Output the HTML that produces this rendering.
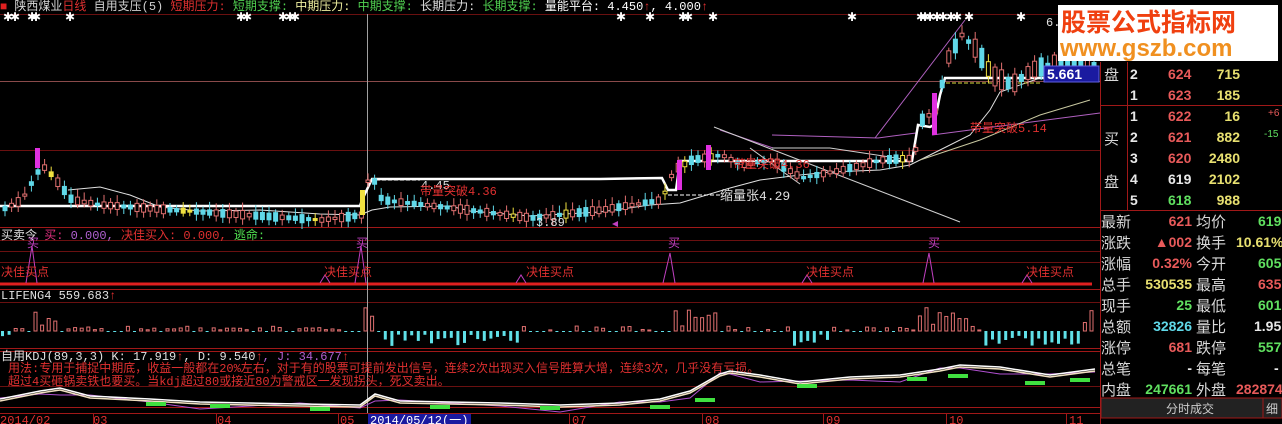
<!DOCTYPE html>
<html><head><meta charset="utf-8"><style>
body{margin:0;background:#000;width:1282px;height:424px;overflow:hidden;position:relative;font-family:"Liberation Sans","WenQuanYi Zen Hei","Noto Sans CJK SC",sans-serif}
svg{position:absolute;left:0;top:0}
.t{font-family:"Liberation Mono","WenQuanYi Zen Hei","Noto Sans CJK SC",monospace;font-size:12px}
.r{position:absolute;font-size:14px;white-space:nowrap;font-family:"Liberation Sans","WenQuanYi Zen Hei","Noto Sans CJK SC",sans-serif;font-weight:bold}
.l{position:absolute;font-size:15px;color:#d8d8d8;white-space:nowrap;font-family:"WenQuanYi Zen Hei","Noto Sans CJK SC",sans-serif}
.rd{color:#e85a5a}.yl{color:#e8e070}.gr{color:#60e060}.cy{color:#60d8e8}.wh{color:#e8e8e8}
</style></head><body>
<svg width="1282" height="424" id="s">
<g stroke="#6a1010" stroke-width="1">
<line x1="0" y1="14.5" x2="1100" y2="14.5"/>
<line x1="0" y1="150.5" x2="1100" y2="150.5"/>
<line x1="0" y1="240.5" x2="1100" y2="240.5"/>
<line x1="0" y1="251.5" x2="1100" y2="251.5"/>
<line x1="0" y1="262.5" x2="1100" y2="262.5"/>
<line x1="0" y1="302.5" x2="1100" y2="302.5"/>
<line x1="0" y1="386.5" x2="1100" y2="386.5"/>
</g>
<g stroke="#a01818" stroke-width="1">
<line x1="0" y1="227.5" x2="1100" y2="227.5"/>
<line x1="0" y1="289.5" x2="1100" y2="289.5"/>
<line x1="0" y1="348.5" x2="1100" y2="348.5"/>
<line x1="0" y1="351.5" x2="1100" y2="351.5"/>
<line x1="0" y1="407.5" x2="1100" y2="407.5"/>
<line x1="0" y1="413.5" x2="1282" y2="413.5"/>
<line x1="1100.5" y1="62" x2="1100.5" y2="424"/>
</g>
<line x1="0" y1="81.5" x2="1100" y2="81.5" stroke="#8a4a4a"/>
<line x1="0" y1="284" x2="1092" y2="284" stroke="#e02020" stroke-width="3"/>
<line x1="367.5" y1="14" x2="367.5" y2="413" stroke="#a0a0a0"/>
<g stroke="#b060c0" fill="none" stroke-width="1">
<polyline points="772,135 878,138 916,133"/>
<polyline points="875,138 965,20"/>
<polyline points="932,135 1100,113"/>
<polyline points="773,148 720,130"/>
</g>
<g stroke="#d0d0d0" fill="none" stroke-width="1">
<polyline points="714,127 960,222"/>
<polyline points="772,148 830,148 910,160"/>
<polyline points="750,148 800,184"/>
</g>
<polyline fill="none" stroke="#e0e0e0" stroke-width="1" points="68,190 100,187 130,195 160,207 200,211 260,210 320,214 360,215 372,210 390,207 450,206 470,211 530,216 600,212 650,205 680,203 700,197 730,188 760,180 800,175 830,172 880,170 910,165 940,150 970,135 990,110 1000,92 1040,78 1090,70"/>
<polyline fill="none" stroke="#c8c8a0" stroke-width="1" points="920,160 980,140 1040,115 1090,100"/>
<polyline fill="none" stroke="#fff" stroke-width="2.5" points="0,206 360,206 362,200 372,179 600,179 662,178 668,190 676,190 680,161 912,161 918,125 930,127 934,125 940,95 945,78 1044,78"/>
<polyline fill="none" stroke="#fff" stroke-width="1" stroke-dasharray="4,2" points="376,180 420,180 M376,192 440,192"/>
<polyline fill="none" stroke="#fff" stroke-dasharray="4,2" points="668,195 720,195"/>
<polyline fill="none" stroke="#e0e040" stroke-dasharray="4,2" points="940,83 1040,83"/>
<g id="cand"></g>
<g class="t">
<text x="421" y="189" fill="#e0e0e0">4.45</text>
<text x="420" y="195" fill="#e03030">带量突破4.36</text>
<text x="720" y="200" fill="#e0e0e0" font-size="13">缩量张4.29</text>
<text x="733" y="168" fill="#e03030">带量突破4.36</text>
<text x="970" y="132" fill="#e03030">带量突破5.14</text>
<text x="536" y="226" fill="#e0e0e0">3.89</text>
<text x="1046" y="26" fill="#e0e0e0">6.</text>
</g>
<polygon points="612,224 618,221 618,227" fill="#c040c0"/>
<g fill="#fff" font-size="9" class="t" id="stars"></g>
<text class="t" y="10" x="0"><tspan fill="#e02020">■</tspan><tspan fill="#d8d8d8"> 陕西煤业</tspan><tspan fill="#e03030">日线</tspan><tspan fill="#d0d0d0"> 自用支压(5) </tspan><tspan fill="#e03030">短期压力: </tspan><tspan fill="#50d050">短期支撑: </tspan><tspan fill="#f0f0a0">中期压力: </tspan><tspan fill="#50d050">中期支撑: </tspan><tspan fill="#e0e0e0">长期压力: </tspan><tspan fill="#50d050">长期支撑: </tspan><tspan fill="#fff">量能平台: 4.450</tspan><tspan fill="#e03030">↑</tspan><tspan fill="#fff">, 4.000</tspan><tspan fill="#e03030">↑</tspan></text>
<text class="t" y="239" x="1"><tspan fill="#e0e0e0">买卖令 </tspan><tspan fill="#e03080">买: </tspan><tspan fill="#b060d0">0.000, </tspan><tspan fill="#e03030">决佳买入: 0.000, </tspan><tspan fill="#50e050">逃命:</tspan></text>
<g fill="none" stroke="#c040c0">
<polyline points="26,283 32,246 37,283"/><polyline points="355,283 361,246 366,283"/>
<polyline points="663,283 670,253 675,283"/><polyline points="923,283 929,253 934,283"/>
<polyline points="320,283 325,275 330,283"/><polyline points="516,283 521,275 526,283"/><polyline points="802,283 807,275 812,283"/><polyline points="1022,283 1027,275 1032,283"/>
</g>
<g class="t" fill="#e03030" font-size="12">
<text x="27" y="247" fill="#c040c0">买</text><text x="356" y="247" fill="#c040c0">买</text><text x="668" y="247" fill="#c040c0">买</text><text x="928" y="247" fill="#c040c0">买</text>
<text x="1" y="276">决佳买点</text><text x="324" y="276">决佳买点</text><text x="526" y="276">决佳买点</text><text x="806" y="276">决佳买点</text><text x="1026" y="276">决佳买点</text>
</g>
<text class="t" y="299" x="1"><tspan fill="#e0e0e0">LIFENG4 559.683</tspan><tspan fill="#e03030">↑</tspan></text>
<g id="bars"></g>
<text class="t" y="360" x="1"><tspan fill="#e0e0e0">自用KDJ(89,3,3) K: 17.919</tspan><tspan fill="#e03030">↑</tspan><tspan fill="#e0e0e0">, D: 9.540</tspan><tspan fill="#e03030">↑</tspan><tspan fill="#b060d0">, J: 34.677</tspan><tspan fill="#e03030">↑</tspan></text>
<text class="t" y="372" x="8" fill="#e03030">用法:专用于捕捉中期底，收益一般都在20%左右，对于有的股票可提前发出信号，连续2次出现买入信号胜算大增，连续3次，几乎没有亏损。</text>
<text class="t" y="385" x="8" fill="#e03030">超过4买砸锅卖铁也要买。当kdj超过80或接近80为警戒区一发现拐头，死叉卖出。</text>
<g id="kdj"></g>
<rect x="368" y="414" width="103" height="10" fill="#1a1aa0"/>
<g class="t" fill="#e03030" font-size="12">
<text x="0" y="424">2014/02</text><text x="93" y="424">03</text><text x="217" y="424">04</text><text x="340" y="424">05</text><text x="572" y="424">07</text><text x="705" y="424">08</text><text x="826" y="424">09</text><text x="949" y="424">10</text><text x="1069" y="424">11</text>
<text x="370" y="424" fill="#fff">2014/05/12(一)</text>
</g>
<g stroke="#a01818"><line x1="93.5" y1="414" x2="93.5" y2="424"/><line x1="216.5" y1="414" x2="216.5" y2="424"/><line x1="338.5" y1="414" x2="338.5" y2="424"/><line x1="569.5" y1="414" x2="569.5" y2="424"/><line x1="702.5" y1="414" x2="702.5" y2="424"/><line x1="823.5" y1="414" x2="823.5" y2="424"/><line x1="946.5" y1="414" x2="946.5" y2="424"/><line x1="1066.5" y1="414" x2="1066.5" y2="424"/></g>
<g stroke="#a01818"><line x1="1100" y1="105.5" x2="1282" y2="105.5"/><line x1="1100" y1="210.5" x2="1282" y2="210.5"/><line x1="1127.5" y1="62" x2="1127.5" y2="210"/></g>
<rect x="1101" y="398" width="168" height="20" fill="#222" stroke="#a01818"/>
<rect x="1263" y="398" width="19" height="20" fill="#222" stroke="#a01818"/>
<rect x="1044" y="66" width="55" height="16" fill="#1a1aa0" stroke="#6060e0"/>
<text x="1047" y="79" fill="#fff" font-size="14" font-weight="bold" font-family="Liberation Sans">5.661</text>
<rect x="1058" y="5" width="220" height="56" fill="#fff"/>
<text x="1061" y="31" fill="#f04010" font-size="25" font-weight="bold" font-family="WenQuanYi Zen Hei,Noto Sans CJK SC,sans-serif">股票公式指标网</text>
<text x="1060" y="56" fill="#f09020" font-size="24" font-weight="bold" font-family="Liberation Sans">www.gszb.com</text>
</svg>
<div class="l" style="left:1104px;top:64px">盘</div>
<div class="l" style="left:1104px;top:128px">买</div>
<div class="l" style="left:1104px;top:171px">盘</div>
<div class="r wh" style="left:1130px;top:66px">2</div><div class="r rd" style="left:1168px;top:66px">624</div><div class="r yl" style="left:1208px;top:66px;width:32px;text-align:right">715</div>
<div class="r wh" style="left:1130px;top:87px">1</div><div class="r rd" style="left:1168px;top:87px">623</div><div class="r yl" style="left:1208px;top:87px;width:32px;text-align:right">185</div>
<div class="r wh" style="left:1130px;top:108px">1</div><div class="r rd" style="left:1168px;top:108px">622</div><div class="r yl" style="left:1200px;top:108px;width:40px;text-align:right">16</div><div class="r rd" style="left:1268px;top:108px;font-size:10px;font-weight:normal">+6</div>
<div class="r wh" style="left:1130px;top:129px">2</div><div class="r rd" style="left:1168px;top:129px">621</div><div class="r yl" style="left:1200px;top:129px;width:40px;text-align:right">882</div><div class="r gr" style="left:1264px;top:129px;font-size:10px;font-weight:normal">-15</div>
<div class="r wh" style="left:1130px;top:150px">3</div><div class="r rd" style="left:1168px;top:150px">620</div><div class="r yl" style="left:1200px;top:150px;width:40px;text-align:right">2480</div>
<div class="r wh" style="left:1130px;top:171px">4</div><div class="r wh" style="left:1168px;top:171px">619</div><div class="r yl" style="left:1200px;top:171px;width:40px;text-align:right">2102</div>
<div class="r wh" style="left:1130px;top:192px">5</div><div class="r gr" style="left:1168px;top:192px">618</div><div class="r yl" style="left:1200px;top:192px;width:40px;text-align:right">988</div>

<div class="l" style="left:1101px;top:211px">最新</div><div class="r rd" style="left:1140px;top:213px;width:52px;text-align:right">621</div><div class="l" style="left:1196px;top:211px">均价</div><div class="r gr" style="left:1258px;top:213px">619</div>
<div class="l" style="left:1101px;top:232px">涨跌</div><div class="r rd" style="left:1140px;top:234px;width:52px;text-align:right">▲002</div><div class="l" style="left:1196px;top:232px">换手</div><div class="r yl" style="left:1236px;top:234px">10.61%</div>
<div class="l" style="left:1101px;top:253px">涨幅</div><div class="r rd" style="left:1140px;top:255px;width:52px;text-align:right">0.32%</div><div class="l" style="left:1196px;top:253px">今开</div><div class="r gr" style="left:1258px;top:255px">605</div>
<div class="l" style="left:1101px;top:274px">总手</div><div class="r yl" style="left:1130px;top:276px;width:62px;text-align:right">530535</div><div class="l" style="left:1196px;top:274px">最高</div><div class="r rd" style="left:1258px;top:276px">635</div>
<div class="l" style="left:1101px;top:295px">现手</div><div class="r gr" style="left:1140px;top:297px;width:52px;text-align:right">25</div><div class="l" style="left:1196px;top:295px">最低</div><div class="r gr" style="left:1258px;top:297px">601</div>
<div class="l" style="left:1101px;top:316px">总额</div><div class="r cy" style="left:1130px;top:318px;width:62px;text-align:right">32826</div><div class="l" style="left:1196px;top:316px">量比</div><div class="r wh" style="left:1254px;top:318px">1.95</div>
<div class="l" style="left:1101px;top:337px">涨停</div><div class="r rd" style="left:1140px;top:339px;width:52px;text-align:right">681</div><div class="l" style="left:1196px;top:337px">跌停</div><div class="r gr" style="left:1258px;top:339px">557</div>
<div class="l" style="left:1101px;top:358px">总笔</div><div class="r wh" style="left:1140px;top:360px;width:52px;text-align:right">-</div><div class="l" style="left:1196px;top:358px">每笔</div><div class="r wh" style="left:1274px;top:360px">-</div>
<div class="l" style="left:1101px;top:379px">内盘</div><div class="r gr" style="left:1130px;top:381px;width:62px;text-align:right">247661</div><div class="l" style="left:1196px;top:379px">外盘</div><div class="r rd" style="left:1236px;top:381px">282874</div>
<div class="l" style="left:1166px;top:400px;font-size:12px;color:#ccc">分时成交</div>
<div class="l" style="left:1266px;top:400px;font-size:12px;color:#ccc">细</div>
<script>
var NS="http://www.w3.org/2000/svg";
function el(p,t,a){var e=document.createElementNS(NS,t);for(var k in a)e.setAttribute(k,a[k]);document.getElementById(p).appendChild(e);return e;}
var kp=[[0,210],[20,200],[40,165],[50,175],[70,200],[100,205],[200,212],[320,220],[360,215],[368,170],[380,200],[450,208],[530,218],[600,210],[660,200],[672,170],[690,160],[720,155],[740,165],[770,160],[800,178],[840,170],[880,160],[912,158],[920,120],[935,110],[945,60],[960,35],[975,50],[990,75],[1010,85],[1030,70],[1060,60],[1095,65]];
function py(x){for(var i=1;i<kp.length;i++){if(x<=kp[i][0]){var a=kp[i-1],b=kp[i];return a[1]+(b[1]-a[1])*(x-a[0])/(b[0]-a[0]);}}return 65;}
var seed=3;function rnd(){seed=(seed*9301+49297)%233280;return seed/233280;}
for(var x=3;x<1095;x+=6.6){var y=py(x);var h=2+rnd()*(y<120?18:7);var up=rnd()>0.5;var c=up?"#e07070":"#60d8e8";
if(rnd()<0.05)c="#f0e040";
el("cand","line",{x1:x+2,y1:y-h/2-3-rnd()*5,x2:x+2,y2:y+h/2+3+rnd()*4,stroke:c});
el("cand","rect",{x:x,y:y-h/2,width:4,height:h,fill:up?"#000":c,stroke:c});}
[[35,148,20],[677,160,30],[706,145,25],[932,93,42]].forEach(function(m){el("cand","rect",{x:m[0],y:m[1],width:5,height:m[2],fill:"#e030e0"});});
[[360,190,25]].forEach(function(m){el("cand","rect",{x:m[0],y:m[1],width:5,height:m[2],fill:"#f0e040"});});
var sx=[3,10,27,31,65,236,242,278,285,290,616,645,678,683,708,847,916,920,925,932,938,946,952,964,1016];
sx.forEach(function(x){el("stars","text",{x:x,y:21}).textContent="✱";});
for(var x=1;x<1095;x+=6.6){var v;var r=rnd();
var pos=(x>30&&x<60)||(x>360&&x<375)||(x>670&&x<720)||(x>915&&x<975)||(x>1080);
if(pos){v=-(4+rnd()*20);}else if((x>380&&x<520)||(x>790&&x<830)||(x>980&&x<1080)||(x<10)){v=3+rnd()*12;}else{v=r>0.5?1:-(1+rnd()*4);}
if(v<0)el("bars","rect",{x:x,y:331+v,width:3,height:-v,fill:"none",stroke:"#e07070"});else el("bars","rect",{x:x,y:331,width:3,height:v,fill:"#60e0e8"});}
var kk=[[0,400],[40,392],[60,389],[90,397],[150,400],[200,403],[300,405],[360,406],[375,395],[400,402],[500,404],[560,406],[620,404],[660,400],[690,392],[720,375],[730,372],[760,376],[800,383],[850,378],[900,376],[940,370],[960,366],[1000,368],[1050,376],[1095,370]];
function kpts(o,j){return kk.map(function(p,i){return p[0]+","+(p[1]+o+(j?((i%3)-1)*4:0))}).join(" ");}
el("kdj","polyline",{points:kpts(2,1),fill:"none",stroke:"#b050d0"});
el("kdj","polyline",{points:kpts(1,0),fill:"none",stroke:"#f0e0c0","stroke-width":1.5});
el("kdj","polyline",{points:kpts(-1,0),fill:"none",stroke:"#fff","stroke-width":1.5});
[[146,402],[210,404],[310,407],[430,405],[540,406],[650,405],[695,398],[797,384],[907,377],[948,374],[1025,381],[1070,378]].forEach(function(g){el("kdj","rect",{x:g[0],y:g[1],width:20,height:4,fill:"#40e040"});});
</script>
</body></html>
